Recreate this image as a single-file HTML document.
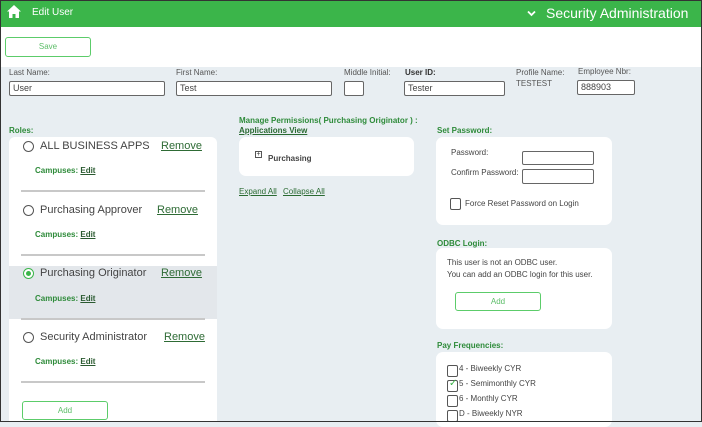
<!DOCTYPE html>
<html><head><style>
*{margin:0;padding:0;box-sizing:border-box}
body{width:702px;height:422px;overflow:hidden;position:relative;font-family:"Liberation Sans",sans-serif;background:#e8eef2;color:#444}
.a{position:absolute;white-space:nowrap}
.hdr{left:0;top:0;width:702px;height:27px;background:#3bb54a}
.w{background:#fff}
.lbl{font-size:8px;color:#555}
.g{color:#2e8b3a;font-weight:bold;font-size:8px}
.inp{border:1px solid #666;border-radius:2px;background:#fff;height:15px;font-size:9px;padding:1px 3px;color:#444}
.btn{border:1px solid #5ccc6a;border-radius:3px;background:#fff;color:#5cbd68;font-size:8px;text-align:center}
.pan{background:#fff;border-radius:7px}
.role{font-size:11px;color:#444}
.rad{width:11px;height:11px;border:1px solid #555;border-radius:50%;background:#fff}
.rem{font-size:11px;color:#2e6b35;text-decoration:underline}
.cmp{font-size:8px;color:#2e8b3a;font-weight:bold}
.cmp u{color:#2a5a30}
.hr{height:2px;background:#c8c8c8;width:184px;left:21px}
.cb{width:11px;height:12px;border:1px solid #555;border-radius:2px;background:#fff}
.t{font-size:8px;color:#444}
</style></head><body>
<div class="a hdr"></div>
<svg class="a" style="left:7px;top:5px" width="14" height="13" viewBox="0 0 14 13"><path d="M7 0L0 6.5H2V13H5.5V9H8.5V13H12V6.5H14Z" fill="#fff"/></svg>
<div class="a" style="left:32px;top:7px;font-size:10px;color:#fff">Edit User</div>
<svg class="a" style="left:527px;top:10px" width="9" height="7" viewBox="0 0 9 7"><path d="M1 1.5L4.5 5L8 1.5" stroke="#fff" stroke-width="1.8" fill="none"/></svg>
<div class="a" style="left:546px;top:5px;font-size:14px;color:#fff">Security Administration</div>
<div class="a w" style="left:0;top:27px;width:702px;height:40px"></div>
<div class="a btn" style="left:5px;top:37px;width:86px;height:20px;line-height:18px">Save</div>

<div class="a lbl" style="left:9px;top:68px">Last Name:</div>
<div class="a inp" style="left:9px;top:81px;width:156px">User</div>
<div class="a lbl" style="left:176px;top:68px">First Name:</div>
<div class="a inp" style="left:176px;top:81px;width:156px">Test</div>
<div class="a lbl" style="left:344px;top:68px">Middle Initial:</div>
<div class="a inp" style="left:344px;top:81px;width:20px"></div>
<div class="a lbl" style="left:405px;top:68px;color:#333;font-weight:bold">User ID:</div>
<div class="a inp" style="left:404px;top:81px;width:101px">Tester</div>
<div class="a lbl" style="left:516px;top:68px">Profile Name:</div>
<div class="a lbl" style="left:516px;top:79px">TESTEST</div>
<div class="a lbl" style="left:578px;top:67px">Employee Nbr:</div>
<div class="a inp" style="left:577px;top:80px;width:58px">888903</div>

<div class="a g" style="left:9px;top:126px">Roles:</div>
<div class="a w" style="left:9px;top:137px;width:208px;height:285px;border-radius:6px 6px 0 0"></div>
<div class="a" style="left:9px;top:266px;width:208px;height:53px;background:#e3e7eb"></div>

<div class="a rad" style="left:23px;top:141px"></div>
<div class="a role" style="left:40px;top:140px">ALL BUSINESS APPS</div>
<div class="a rem" style="left:161px;top:140px">Remove</div>
<div class="a cmp" style="left:35px;top:166px">Campuses: <u>Edit</u></div>
<div class="a hr" style="top:190px"></div>

<div class="a rad" style="left:23px;top:205px"></div>
<div class="a role" style="left:40px;top:204px">Purchasing Approver</div>
<div class="a rem" style="left:157px;top:204px">Remove</div>
<div class="a cmp" style="left:35px;top:230px">Campuses: <u>Edit</u></div>
<div class="a hr" style="top:254px"></div>

<div class="a rad" style="left:23px;top:268px;border-color:#3bb54a"><div style="width:5px;height:5px;border-radius:50%;background:#3bb54a;margin:2px"></div></div>
<div class="a role" style="left:40px;top:267px">Purchasing Originator</div>
<div class="a rem" style="left:161px;top:267px">Remove</div>
<div class="a cmp" style="left:35px;top:294px">Campuses: <u>Edit</u></div>
<div class="a hr" style="top:318px"></div>

<div class="a rad" style="left:23px;top:332px"></div>
<div class="a role" style="left:40px;top:331px">Security Administrator</div>
<div class="a rem" style="left:164px;top:331px">Remove</div>
<div class="a cmp" style="left:35px;top:357px">Campuses: <u>Edit</u></div>
<div class="a hr" style="top:381px"></div>
<div class="a btn" style="left:22px;top:401px;width:86px;height:19px;line-height:17px">Add</div>

<div class="a g" style="left:239px;top:116px">Manage Permissions( Purchasing Originator ) :</div>
<div class="a g" style="left:239px;top:126px;text-decoration:underline;color:#2a6a32">Applications View</div>
<div class="a pan" style="left:239px;top:137px;width:175px;height:39px"></div>
<div class="a" style="left:255px;top:151px;width:7px;height:7px;border:1px solid #555;font-size:7px;line-height:5px;text-align:center;color:#333">+</div>
<div class="a" style="left:268px;top:154px;font-size:8px;color:#444;font-weight:bold">Purchasing</div>
<div class="a" style="left:239px;top:187px;font-size:8px;color:#2a6a32;text-decoration:underline">Expand All</div>
<div class="a" style="left:283px;top:187px;font-size:8px;color:#2a6a32;text-decoration:underline">Collapse All</div>

<div class="a g" style="left:437px;top:126px">Set Password:</div>
<div class="a pan" style="left:436px;top:137px;width:176px;height:88px"></div>
<div class="a t" style="left:451px;top:148px">Password:</div>
<div class="a inp" style="left:522px;top:151px;width:72px;height:14px"></div>
<div class="a t" style="left:451px;top:168px">Confirm Password:</div>
<div class="a inp" style="left:522px;top:169px;width:72px;height:15px"></div>
<div class="a cb" style="left:450px;top:198px"></div>
<div class="a t" style="left:465px;top:199px">Force Reset Password on Login</div>

<div class="a g" style="left:437px;top:239px">ODBC Login:</div>
<div class="a pan" style="left:436px;top:248px;width:176px;height:81px"></div>
<div class="a t" style="left:447px;top:258px">This user is not an ODBC user.</div>
<div class="a t" style="left:447px;top:270px">You can add an ODBC login for this user.</div>
<div class="a btn" style="left:455px;top:292px;width:86px;height:19px;line-height:17px">Add</div>

<div class="a g" style="left:437px;top:341px">Pay Frequencies:</div>
<div class="a pan" style="left:436px;top:352px;width:176px;height:75px"></div>
<div class="a cb" style="left:447px;top:365px"></div><div class="a t" style="left:459px;top:364px">4 - Biweekly CYR</div>
<div class="a cb" style="left:447px;top:380px"></div><div class="a" style="left:449px;top:378px;font-size:10px;color:#3bb54a">✓</div><div class="a t" style="left:459px;top:379px">5 - Semimonthly CYR</div>
<div class="a cb" style="left:447px;top:395px"></div><div class="a t" style="left:459px;top:394px">6 - Monthly CYR</div>
<div class="a cb" style="left:447px;top:410px"></div><div class="a t" style="left:459px;top:409px">D - Biweekly NYR</div>

<div class="a" style="left:0;top:0;width:702px;height:422px;border:1px solid #333;pointer-events:none"></div>
</body></html>
